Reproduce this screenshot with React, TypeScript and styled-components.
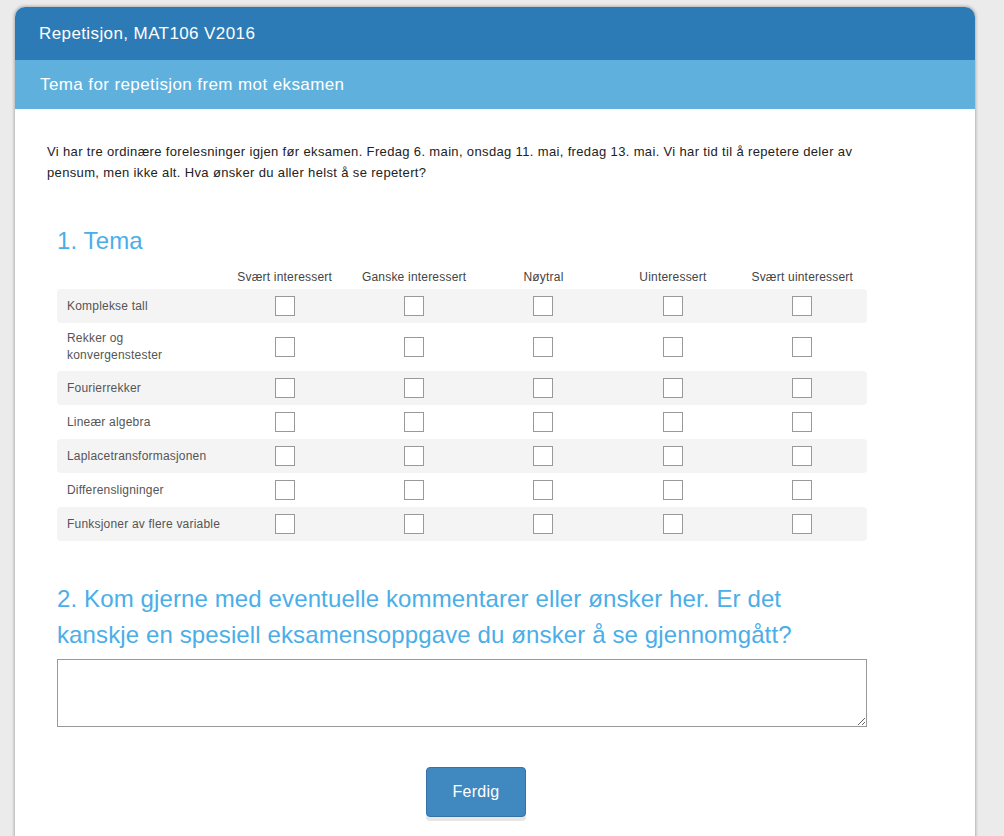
import React from "react";
import styled, { createGlobalStyle } from "styled-components";

const Global = createGlobalStyle`
  html, body { margin: 0; padding: 0; }
  body {
    background: #ebebeb;
    font-family: "Liberation Sans", Arial, sans-serif;
    overflow: hidden;
  }
`;

const Page = styled.div`
  padding: 7px 29px 0 15px;
  height: 836px;
  box-sizing: border-box;
`;

const Card = styled.div`
  width: 960px;
  background: #fff;
  border-radius: 10px 10px 0 0;
  box-shadow: 0 0 3px 1px rgba(0, 0, 0, 0.25);
  overflow: hidden;
  min-height: 840px;
`;

const TopBar = styled.div`
  background: #2c7bb6;
  height: 53px;
  display: flex;
  align-items: center;
  padding-left: 24px;
  color: #fff;
  font-size: 17px;
  letter-spacing: 0.4px;
`;

const SubBar = styled.div`
  background: #5fb0dc;
  height: 49px;
  display: flex;
  align-items: center;
  padding-left: 25px;
  color: #fff;
  font-size: 17px;
  letter-spacing: 0.4px;
`;

const Body = styled.div`
  padding: 32px 32px 40px 32px;
`;

const Intro = styled.p`
  margin: 0;
  font-size: 13px;
  line-height: 21px;
  letter-spacing: 0.35px;
  color: #222;
  max-width: 860px;
`;

const Question = styled.section<{ $top: number }>`
  margin-top: ${(p) => p.$top}px;
  padding-left: 10px;
  width: 810px;
`;

const QTitle = styled.h2`
  margin: 0;
  font-weight: normal;
  font-size: 24px;
  line-height: 36px;
  letter-spacing: 0.12px;
  color: #4aaee8;
  max-width: 770px;
`;

const Grid = styled.div`
  margin-top: 3px;
  display: flex;
  flex-direction: column;
`;

const HeadRow = styled.div`
  display: grid;
  grid-template-columns: 163px repeat(5, 1fr);
  height: 27px;
  padding-top: 2px;
  box-sizing: border-box;
  align-items: center;
  font-size: 12px;
  letter-spacing: 0.2px;
  color: #444;
`;

const ColHead = styled.div`
  text-align: center;
  white-space: nowrap;
`;

const Row = styled.div<{ $striped: boolean; $tall: boolean }>`
  display: grid;
  grid-template-columns: 163px repeat(5, 1fr);
  align-items: center;
  min-height: ${(p) => (p.$tall ? 48 : 34)}px;
  background: ${(p) => (p.$striped ? "#f4f4f4" : "transparent")};
  border-radius: 4px;
`;

const RowLabel = styled.div`
  padding: 0 0 0 10px;
  font-size: 12px;
  line-height: 17px;
  letter-spacing: 0.2px;
  color: #555;
  white-space: nowrap;
`;

const Cell = styled.div`
  display: flex;
  justify-content: center;
  align-items: center;
`;

const Box = styled.span`
  width: 18px;
  height: 18px;
  border: 1px solid #999;
  background: #fff;
  display: block;
`;

const TextArea = styled.textarea`
  display: block;
  margin-top: 6px;
  width: 810px;
  height: 68px;
  box-sizing: border-box;
  border: 1px solid #999;
  resize: vertical;
  font-family: inherit;
`;

const Actions = styled.div`
  display: flex;
  justify-content: center;
  margin-top: 40px;
  padding-right: 38px;
`;

const Button = styled.button`
  width: 100px;
  height: 50px;
  background: #3f88c0;
  border: 1px solid #3573a6;
  border-radius: 4px;
  color: #fff;
  font-family: "Liberation Sans", Arial, sans-serif;
  font-size: 16px;
  letter-spacing: 0.3px;
  box-shadow: 0 4px 0 #e6e6e6;
  cursor: pointer;
`;

const cols = [
  "Svært interessert",
  "Ganske interessert",
  "Nøytral",
  "Uinteressert",
  "Svært uinteressert",
];

const topics = [
  "Komplekse tall",
  "Rekker og konvergenstester",
  "Fourierrekker",
  "Lineær algebra",
  "Laplacetransformasjonen",
  "Differensligninger",
  "Funksjoner av flere variable",
];

export default function App() {
  return (
    <>
      <Global />
      <Page>
        <Card>
          <TopBar>Repetisjon, MAT106 V2016</TopBar>
          <SubBar>Tema for repetisjon frem mot eksamen</SubBar>
          <Body>
            <Intro>
              Vi har tre ordinære forelesninger igjen før eksamen. Fredag 6.
              main, onsdag 11. mai, fredag 13. mai. Vi har tid til å repetere
              deler av pensum, men ikke alt. Hva ønsker du aller helst å se
              repetert?
            </Intro>
            <Question $top={40}>
              <QTitle>1. Tema</QTitle>
              <Grid>
                <HeadRow>
                  <div />
                  {cols.map((c) => (
                    <ColHead key={c}>{c}</ColHead>
                  ))}
                </HeadRow>
                {topics.map((t, i) => (
                  <Row key={t} $striped={i % 2 === 0} $tall={i === 1}>
                    <RowLabel>
                      {i === 1 ? (
                        <>
                          Rekker og
                          <br />
                          konvergenstester
                        </>
                      ) : (
                        t
                      )}
                    </RowLabel>
                    {cols.map((c) => (
                      <Cell key={c}>
                        <Box />
                      </Cell>
                    ))}
                  </Row>
                ))}
              </Grid>
            </Question>
            <Question $top={40}>
              <QTitle>
                2. Kom gjerne med eventuelle kommentarer eller ønsker her. Er det
                kanskje en spesiell eksamensoppgave du ønsker å se gjennomgått?
              </QTitle>
              <TextArea />
            </Question>
            <Actions>
              <Button>Ferdig</Button>
            </Actions>
          </Body>
        </Card>
      </Page>
    </>
  );
}
